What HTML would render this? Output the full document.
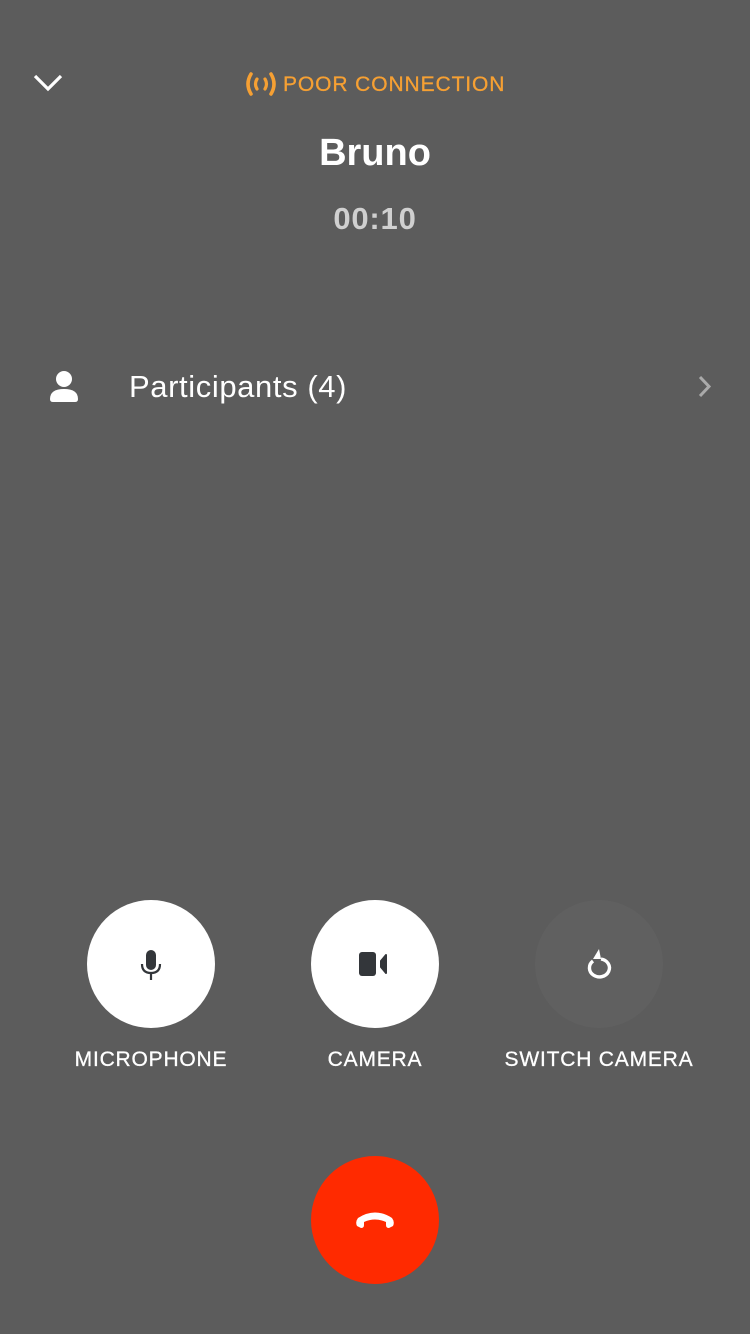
<!DOCTYPE html>
<html><head><meta charset="utf-8"><style>
body{margin:0;width:750px;height:1334px;background:#5c5c5c;position:relative;overflow:hidden;font-family:"Liberation Sans",sans-serif;}
.a{position:absolute}
.c{position:absolute;width:128px;height:128px;border-radius:50%;}
.lbl{position:absolute;top:1048px;color:#fff;font-size:21px;text-align:center;width:240px;letter-spacing:0.8px;-webkit-text-stroke:0.3px #fff}
</style></head><body>
<svg class="a" style="left:32px;top:72px" width="32" height="22" viewBox="0 0 32 22"><path d="M3 4 L16 17 L29 4" fill="none" stroke="#fff" stroke-width="3.2"/></svg>
<svg class="a" style="left:244px;top:71px" width="34" height="26" viewBox="0 0 34 26"><path d="M7 3 Q1 13 7 23" fill="none" stroke="#f6a033" stroke-width="3.6" stroke-linecap="round"/><path d="M27 3 Q33 13 27 23" fill="none" stroke="#f6a033" stroke-width="3.6" stroke-linecap="round"/><path d="M13 8 Q10 13 13 18" fill="none" stroke="#f6a033" stroke-width="3.2" stroke-linecap="round"/><path d="M21 8 Q24 13 21 18" fill="none" stroke="#f6a033" stroke-width="3.2" stroke-linecap="round"/></svg>
<div class="a" style="left:283px;top:73px;color:#f6a033;font-size:21px;letter-spacing:0.9px;-webkit-text-stroke:0.3px #f6a033">POOR CONNECTION</div>
<div class="a" style="left:0;width:750px;top:132px;text-align:center;color:#fff;font-size:38px;font-weight:bold">Bruno</div>
<div class="a" style="left:0;width:750px;top:201px;text-align:center;color:#d0d0d0;font-size:31px;font-weight:bold;letter-spacing:0.8px">00:10</div>
<svg class="a" style="left:48px;top:369px" width="32" height="34" viewBox="0 0 32 34"><circle cx="16" cy="10" r="8" fill="#fff"/><path d="M2 30 Q2 20 16 20 Q30 20 30 30 Q30 33 27 33 L5 33 Q2 33 2 30Z" fill="#fff"/></svg>
<div class="a" style="left:129px;top:369px;color:#fff;font-size:31px;letter-spacing:0.6px">Participants (4)</div>
<svg class="a" style="left:696px;top:374px" width="18" height="26" viewBox="0 0 18 26"><path d="M4 3 L13 12.5 L4 22" fill="none" stroke="#aaa" stroke-width="3"/></svg>
<div class="c" style="left:87px;top:900px;background:#fff"></div>
<div class="c" style="left:311px;top:900px;background:#fff"></div>
<div class="c" style="left:535px;top:900px;background:#606060"></div>
<svg class="a" style="left:137px;top:948px" width="28" height="34" viewBox="0 0 28 34"><rect x="9" y="2" width="10" height="20" rx="5" fill="#33363a"/><path d="M5 16 Q5 25 14 25 Q23 25 23 16" fill="none" stroke="#33363a" stroke-width="2.2"/><path d="M14 25 V32" stroke="#33363a" stroke-width="2.2"/></svg>
<svg class="a" style="left:357px;top:950px" width="36" height="28" viewBox="0 0 36 28"><rect x="2" y="2" width="17" height="24" rx="3" fill="#33363a"/><path d="M29 5 L24 11 V17 L29 23 Z" fill="#33363a" stroke="#33363a" stroke-width="2" stroke-linejoin="round"/></svg>
<svg class="a" style="left:580px;top:946px" width="38" height="36" viewBox="0 0 38 36"><path d="M13 15 A10 9 0 1 0 21 13" fill="none" stroke="#fff" stroke-width="3.4"/><path d="M19 3 L13 13 L21 13 Z" fill="#fff"/></svg>
<div class="lbl" style="left:31px">MICROPHONE</div>
<div class="lbl" style="left:255px">CAMERA</div>
<div class="lbl" style="left:479px">SWITCH CAMERA</div>
<div class="c" style="left:311px;top:1156px;background:#ff2a00"></div>
<svg class="a" style="left:352px;top:1208px" width="46" height="24" viewBox="0 0 46 24"><path d="M5 18 Q3 14 6 10 Q23 -1 40 10 Q43 14 41 18 L37 20 Q34 20 34 17 L34 14 Q23 9 12 14 L12 17 Q12 20 9 20 Z" fill="#fff"/></svg>
</body></html>
